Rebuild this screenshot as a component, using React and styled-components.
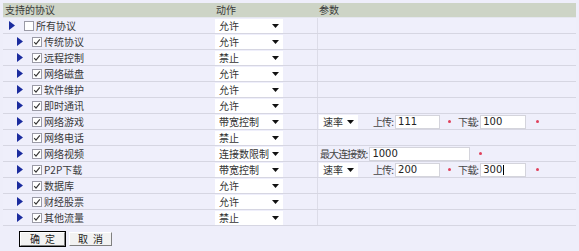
import React from "react";
import styled, { createGlobalStyle } from "styled-components";

const Global = createGlobalStyle`
  html, body { margin: 0; padding: 0; background: #eeeefa; }
  body { font-family: "Noto Sans CJK SC", "DejaVu Sans", sans-serif; font-size: 10px; color: #3a3a3a; }
`;

const Page = styled.div`
  width: 579px;
  height: 251px;
  padding: 3px 3px 0 3px;
  box-sizing: border-box;
  background: #eeeefa;
`;

const Table = styled.div`
  display: flex;
  flex-direction: column;
`;

const Header = styled.div`
  display: grid;
  grid-template-columns: 207px 107px 1fr;
  height: 14px;
  background: #cdd4c6;
  line-height: 14px;
  font-size: 10px;
  color: #3a3a3a;
  border-bottom: 1px solid #e4e6ee;
`;

const HeadCell = styled.div`
  padding-left: ${(p) => p.$pad || 2}px;
`;

const Row = styled.div`
  display: grid;
  grid-template-columns: 207px 107px 1fr;
  height: 15px;
  border-bottom: 1px solid #d6d6e2;
  background: #efeffb;
`;

const NameCell = styled.div`
  display: flex;
  align-items: center;
  padding-left: ${(p) => (p.$top ? 6 : 14)}px;
  font-size: 10px;
  line-height: 15px;
  white-space: nowrap;
`;

const ActionCell = styled.div`
  display: flex;
  align-items: center;
  padding-left: 5px;
`;

const ParamCell = styled.div`
  display: flex;
  align-items: center;
  border-left: 1px solid #dcdce8;
  padding-left: 1px;
  font-size: 10px;
  white-space: nowrap;
`;

const Arrow = styled.svg`
  width: 6px;
  height: 9px;
  margin-right: 9px;
  flex: none;
`;

const Box = styled.span`
  width: 10px;
  height: 10px;
  border: 1px solid #9a9aa6;
  background: #fff;
  box-sizing: border-box;
  display: inline-flex;
  align-items: center;
  justify-content: center;
  margin-right: 2px;
  flex: none;
`;

const Select = styled.div`
  width: ${(p) => p.$w}px;
  height: 14px;
  background: #fff;
  display: flex;
  align-items: center;
  justify-content: space-between;
  padding: 0 4px 0 4px;
  box-sizing: border-box;
  font-size: 10px;
  line-height: 14px;
  color: #333;
  white-space: nowrap;
`;

const Caret = styled.svg`
  width: 7px;
  height: 4px;
  flex: none;
`;

const Label = styled.span`
  margin-left: ${(p) => p.$ml || 0}px;
  margin-right: 2px;
  letter-spacing: -0.9px;
  color: #444;
`;

const Input = styled.div`
  width: ${(p) => p.$w}px;
  height: 14px;
  background: #fff;
  border: 1px solid #d4d4dc;
  box-sizing: border-box;
  font-family: "DejaVu Sans", sans-serif;
  font-size: 10px;
  line-height: 12px;
  padding-left: 2px;
  color: #222;
  display: flex;
  align-items: center;
`;

const Cursor = styled.span`
  display: inline-block;
  width: 1px;
  height: 10px;
  background: #000;
  margin-left: 1px;
`;

const Dot = styled.span`
  display: inline-block;
  width: 3px;
  height: 3px;
  border-radius: 50%;
  background: #e0405c;
  margin-left: ${(p) => p.$ml}px;
`;

const Buttons = styled.div`
  display: flex;
  gap: 4px;
  padding: 6px 0 0 17px;
`;

const Button = styled.button`
  width: ${(p) => (p.$primary ? 45 : 43)}px;
  height: 14px;
  padding: 0;
  margin: 0;
  font-family: "Noto Sans CJK SC", sans-serif;
  font-size: 10px;
  line-height: 10px;
  color: #222;
  background: #f2f2f2;
  box-sizing: border-box;
  border: 1px solid;
  border-color: #fff #808080 #808080 #fff;
  outline: ${(p) => (p.$primary ? "1px solid #000" : "none")};
  outline-offset: 0;
  letter-spacing: 5px;
  text-indent: 5px;
`;

const TriangleIcon = () => (
  <Arrow viewBox="0 0 6 9">
    <path d="M0 0 L6 4.5 L0 9 Z" fill="#1b2c9e" />
  </Arrow>
);

const Check = ({ checked }) => (
  <Box>
    {checked && (
      <svg width="8" height="8" viewBox="0 0 8 8">
        <path d="M1.2 4.2 L3 6.2 L6.8 1.4" stroke="#333" strokeWidth="1.1" fill="none" />
      </svg>
    )}
  </Box>
);

const Dropdown = ({ value, w = 68 }) => (
  <Select $w={w}>
    <span>{value}</span>
    <Caret viewBox="0 0 7 4">
      <path d="M0 0 L7 0 L3.5 4 Z" fill="#111" />
    </Caret>
  </Select>
);

const RateParams = ({ up, down, cursor }) => (
  <ParamCell>
    <Dropdown value="速率" w={39} />
    <Label $ml={15}>上传:</Label>
    <Input $w={45}>{up}</Input>
    <Dot $ml={8} />
    <Label $ml={7}>下载:</Label>
    <Input $w={46}>
      {down}
      {cursor && <Cursor />}
    </Input>
    <Dot $ml={10} />
  </ParamCell>
);

const rows = [
  { name: "传统协议", action: "允许" },
  { name: "远程控制", action: "禁止" },
  { name: "网络磁盘", action: "允许" },
  { name: "软件维护", action: "允许" },
  { name: "即时通讯", action: "允许" },
  { name: "网络游戏", action: "带宽控制", rate: { up: "111", down: "100" } },
  { name: "网络电话", action: "禁止" },
  { name: "网络视频", action: "连接数限制", conn: "1000" },
  { name: "P2P下载", action: "带宽控制", rate: { up: "200", down: "300", cursor: true } },
  { name: "数据库", action: "允许" },
  { name: "财经股票", action: "允许" },
  { name: "其他流量", action: "禁止" },
];

export default function App() {
  return (
    <Page>
      <Global />
      <Table>
        <Header>
          <HeadCell $pad={2}>支持的协议</HeadCell>
          <HeadCell $pad={6}>动作</HeadCell>
          <HeadCell $pad={2}>参数</HeadCell>
        </Header>
        <Row>
          <NameCell $top>
            <TriangleIcon />
            <Check checked={false} />
            所有协议
          </NameCell>
          <ActionCell>
            <Dropdown value="允许" />
          </ActionCell>
          <ParamCell />
        </Row>
        {rows.map((r) => (
          <Row key={r.name}>
            <NameCell>
              <TriangleIcon />
              <Check checked />
              {r.name}
            </NameCell>
            <ActionCell>
              <Dropdown value={r.action} />
            </ActionCell>
            {r.rate ? (
              <RateParams {...r.rate} />
            ) : r.conn ? (
              <ParamCell>
                <Label $ml={1}>最大连接数:</Label>
                <Input $w={101}>{r.conn}</Input>
                <Dot $ml={9} />
              </ParamCell>
            ) : (
              <ParamCell />
            )}
          </Row>
        ))}
      </Table>
      <Buttons>
        <Button $primary>确定</Button>
        <Button>取消</Button>
      </Buttons>
    </Page>
  );
}
